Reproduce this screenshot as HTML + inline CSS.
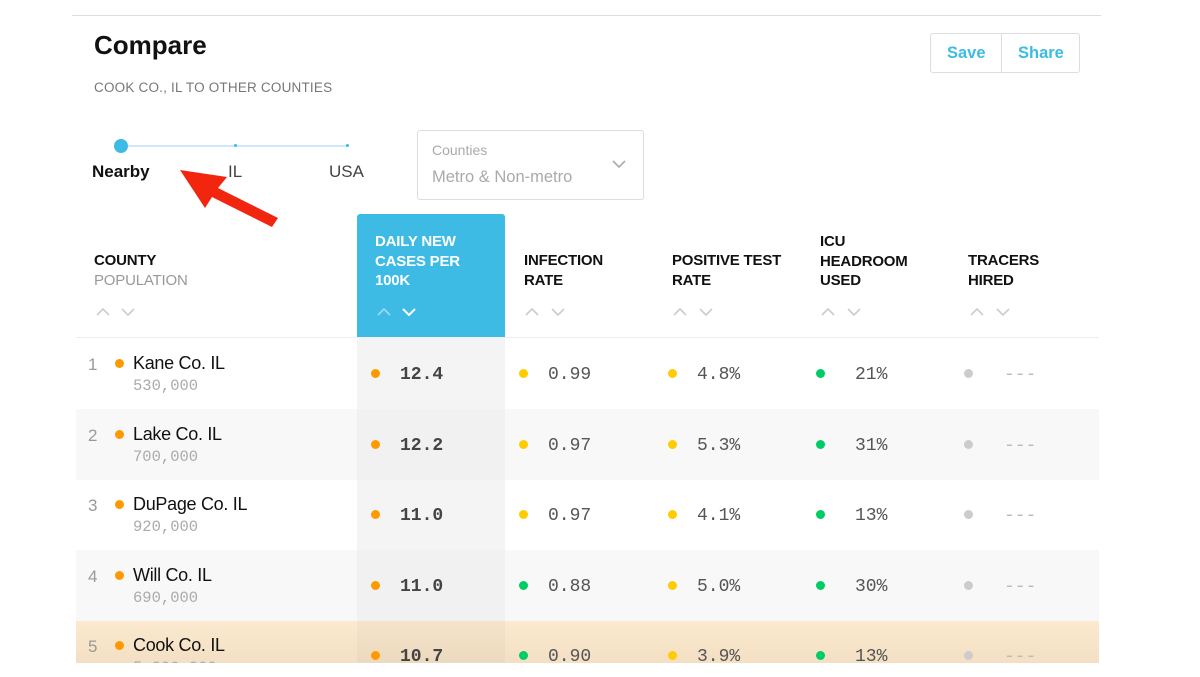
<!DOCTYPE html>
<html><head><style>
body{margin:0;width:1200px;height:675px;background:#fff;position:relative;overflow:hidden;font-family:"Liberation Sans",sans-serif;}
.a{position:absolute;}
.mono{font-family:"Liberation Mono",monospace;}
.dot{position:absolute;width:9px;height:9px;border-radius:50%;}
.h{font-size:15px;font-weight:bold;color:#111;line-height:19.5px;letter-spacing:-0.2px}
</style></head><body>
<div class="a" style="left:72px;top:15px;width:1029px;height:1px;background:#ddd"></div>
<div class="a" style="left:94px;top:30px;font-size:26px;font-weight:bold;color:#111">Compare</div>
<div class="a" style="left:94px;top:80px;font-size:13.5px;color:#777;letter-spacing:0.2px">COOK CO., IL TO OTHER COUNTIES</div>
<div class="a" style="left:930px;top:33px;width:148px;height:38px;border:1px solid #ddd;border-radius:3px"></div>
<div class="a" style="left:1001px;top:33px;width:1px;height:40px;background:#ddd"></div>
<div class="a" style="left:947px;top:44px;font-size:16.5px;font-weight:bold;color:#3dbbe4">Save</div>
<div class="a" style="left:1018px;top:44px;font-size:16.5px;font-weight:bold;color:#3dbbe4">Share</div>
<div class="a" style="left:121px;top:145px;width:227px;height:2px;background:#cdeaf6"></div>
<div class="a" style="left:114px;top:139px;width:14px;height:14px;border-radius:50%;background:#3dbbe4"></div>
<div class="a" style="left:234px;top:144px;width:3px;height:3px;background:#3dbbe4;border-radius:50%"></div>
<div class="a" style="left:346px;top:144px;width:3px;height:3px;background:#3dbbe4;border-radius:50%"></div>
<div class="a" style="left:92px;top:162px;font-size:17px;font-weight:bold;color:#111">Nearby</div>
<div class="a" style="left:228px;top:162px;font-size:17px;color:#444">IL</div>
<div class="a" style="left:329px;top:162px;font-size:17px;color:#444">USA</div>
<svg class="a" style="left:175px;top:165px" width="110" height="65"><polygon points="5,5 52,12 43,23 103,53 97,62 37,32 30,43" fill="#f2260f"/></svg>
<div class="a" style="left:417px;top:130px;width:225px;height:68px;border:1px solid #ddd;border-radius:3px"></div>
<div class="a" style="left:432px;top:142px;font-size:14px;color:#aaa">Counties</div>
<div class="a" style="left:432px;top:168px;font-size:16.5px;color:#aaa">Metro &amp; Non-metro</div>
<svg class="a" style="left:612px;top:159px" width="14" height="10"><path d="M1 2 L7 8 L13 2" fill="none" stroke="#aaa" stroke-width="1.6"/></svg>
<div class="a" style="left:357px;top:214px;width:148px;height:123px;background:#3dbbe4;border-radius:3px 3px 0 0"></div>
<div class="a" style="left:357px;top:337px;width:148px;height:326px;background:#f4f4f4"></div>
<div class="a" style="left:76px;top:337px;width:1023px;height:1px;background:#eee"></div>
<div class="a h" style="left:94px;top:251px">COUNTY<br><span style="font-weight:normal;color:#999">POPULATION</span></div>
<div class="a h" style="left:375px;top:232px;color:#fff">DAILY NEW<br>CASES PER<br>100K</div>
<div class="a h" style="left:524px;top:251px">INFECTION<br>RATE</div>
<div class="a h" style="left:672px;top:251px">POSITIVE TEST<br>RATE</div>
<div class="a h" style="left:820px;top:232px">ICU<br>HEADROOM<br>USED</div>
<div class="a h" style="left:968px;top:251px">TRACERS<br>HIRED</div>
<svg class="a" style="left:0;top:0" width="1200" height="675">
<g fill="none" stroke-width="1.6">
<g stroke="#ccc"><path d="M97 315l6-6 6 6M122 309l6 6 6-6"/><path d="M526 315l6-6 6 6M552 309l6 6 6-6"/><path d="M674 315l6-6 6 6M700 309l6 6 6-6"/><path d="M822 315l6-6 6 6M848 309l6 6 6-6"/><path d="M971 315l6-6 6 6M997 309l6 6 6-6"/></g>
<path d="M378 315l6-6 6 6" stroke="#9fdcf0"/><path d="M403 309l6 6 6-6" stroke="#fff" stroke-width="2"/>
</g></svg>
<div class="a" style="left:76px;top:409px;width:1023px;height:71px;background:#f8f8f8"></div>
<div class="a" style="left:76px;top:550px;width:1023px;height:71px;background:#f8f8f8"></div>
<div class="a" style="left:76px;top:621px;width:1023px;height:42px;background:linear-gradient(#fbead0,#f3dfc3)"></div>
<div class="a" style="left:357px;top:409px;width:148px;height:71px;background:#f1f1f1"></div>
<div class="a" style="left:357px;top:550px;width:148px;height:71px;background:#f1f1f1"></div>
<div class="a" style="left:357px;top:621px;width:148px;height:42px;background:linear-gradient(#f5e3ca,#ecdabf)"></div>
<div id="rows"></div>
<script>
var d=[["1","Kane","530,000","12.4","#fc0","0.99","#fc0","4.8%","21%"],["2","Lake","700,000","12.2","#fc0","0.97","#fc0","5.3%","31%"],["3","DuPage","920,000","11.0","#fc0","0.97","#fc0","4.1%","13%"],["4","Will","690,000","11.0","#0c6","0.88","#fc0","5.0%","30%"],["5","Cook","5,200,000","10.7","#0c6","0.90","#fc0","3.9%","13%"]];
var h="";d.forEach(function(r,i){var y=338+i*70.5;
h+='<div class="a" style="left:88px;top:'+(y+17)+'px;font-size:17px;color:#999">'+r[0]+'</div>';
h+='<div class="dot" style="left:115px;top:'+(y+21)+'px;background:#f90"></div>';
h+='<div class="a" style="left:133px;top:'+(y+15)+'px;font-size:18px;color:#111;letter-spacing:-0.3px">'+r[1]+' Co. IL</div>';
h+='<div class="a mono" style="left:133px;top:'+(y+39)+'px;font-size:15.5px;color:#aaa">'+r[2]+'</div>';
h+='<div class="dot" style="left:371px;top:'+(y+31)+'px;background:#f90"></div>';
h+='<div class="a mono" style="left:400px;top:'+(y+27)+'px;font-size:18px;font-weight:bold;color:#444">'+r[3]+'</div>';
h+='<div class="dot" style="left:519px;top:'+(y+31)+'px;background:'+r[4]+'"></div>';
h+='<div class="a mono" style="left:548px;top:'+(y+27)+'px;font-size:18px;color:#555">'+r[5]+'</div>';
h+='<div class="dot" style="left:668px;top:'+(y+31)+'px;background:'+r[6]+'"></div>';
h+='<div class="a mono" style="left:697px;top:'+(y+27)+'px;font-size:18px;color:#555">'+r[7]+'</div>';
h+='<div class="dot" style="left:816px;top:'+(y+31)+'px;background:#0c6"></div>';
h+='<div class="a mono" style="left:855px;top:'+(y+27)+'px;font-size:18px;color:#555">'+r[8]+'</div>';
h+='<div class="dot" style="left:964px;top:'+(y+31)+'px;background:#ccc"></div>';
h+='<div class="a mono" style="left:1004px;top:'+(y+27)+'px;font-size:18px;color:#bbb">---</div>';});
document.getElementById("rows").innerHTML=h;
</script>
<div class="a" style="left:0;top:663px;width:1200px;height:12px;background:#fff"></div>
</body></html>
